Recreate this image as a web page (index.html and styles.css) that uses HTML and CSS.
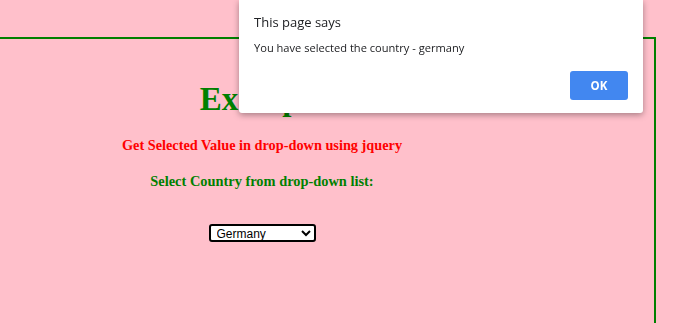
FILE: index.html
```html
<!DOCTYPE html>
<html>
<head>
<meta charset="utf-8">
<title>Get Selected Value</title>
<link rel="stylesheet" href="styles.css">
</head>
<body>
<div class="box">
  <h1 class="title">Example</h1>
  <h3 class="subtitle">Get Selected Value in drop-down using jquery</h3>
  <h3 class="label">Select Country from drop-down list:</h3>
  <div class="field">
    <select class="country">
      <option>Germany</option>
      <option>India</option>
      <option>France</option>
    </select>
  </div>
</div>
<div class="dialog">
  <div class="dialog-title">This page says</div>
  <div class="dialog-msg">You have selected the country - germany</div>
  <div class="dialog-actions">
    <button class="ok">OK</button>
  </div>
</div>
</body>
</html>
```
FILE: styles.css
```css
html, body {
  margin: 0;
  padding: 0;
  height: 100%;
  overflow: hidden;
}
body {
  background: #ffc0cb;
  font-family: "Liberation Serif", "Times New Roman", serif;
}
.box {
  margin-top: 37px;
  margin-left: -132px;
  width: 784px;
  height: 400px;
  border: 2px solid green;
  text-align: center;
}
.title {
  color: green;
  font-size: 33px;
  font-weight: bold;
  margin: 42px 0 0;
  line-height: 37px;
}
.subtitle {
  color: red;
  font-size: 14.3px;
  margin: 18px 0 0;
  line-height: 18px;
}
.label {
  color: green;
  font-size: 14.4px;
  margin: 18px 0 0;
  line-height: 18px;
}
.field {
  margin-top: 34px;
}
.country {
  font-family: "Liberation Sans", Arial, sans-serif;
  font-size: 12px;
  width: 107px;
  height: 18px;
  border: 2px solid #000;
  border-radius: 3px;
  background: #fff;
  padding: 0 0 0 2px;
  color: #000;
}
.dialog {
  position: fixed;
  top: 0;
  left: 239px;
  width: 404px;
  height: 113px;
  background: #fff;
  border-radius: 0 0 3px 3px;
  box-shadow: 0 2px 6px rgba(0,0,0,0.35);
  font-family: "Open Sans", "Noto Sans", sans-serif;
  color: #222;
  box-sizing: border-box;
  padding: 13px 15px 0;
  display: flex;
  flex-direction: column;
}
.dialog-title {
  font-size: 13px;
  line-height: 19px;
  color: #202124;
}
.dialog-msg {
  font-size: 11.1px;
  line-height: 16px;
  margin-top: 8px;
  color: #202124;
}
.dialog-actions {
  display: flex;
  justify-content: flex-end;
  margin-top: 15px;
}
.ok {
  width: 58px;
  height: 29px;
  border: none;
  border-radius: 3px;
  background: #4287f0;
  color: #fff;
  font-family: "Open Sans", "Noto Sans", sans-serif;
  font-weight: bold;
  font-size: 11.5px;
  margin-right: 0;
}
```
